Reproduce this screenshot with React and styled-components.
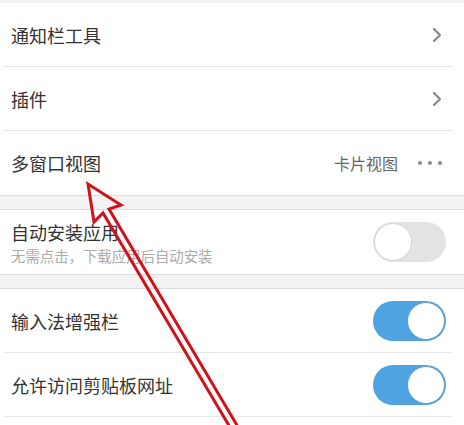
import React from "react";
import styled, { createGlobalStyle } from "styled-components";

const Global = createGlobalStyle`
  html, body { margin: 0; padding: 0; }
  body {
    background: #f3f3f3;
    font-family: "Noto Sans CJK SC", "Noto Sans", sans-serif;
    width: 464px;
    height: 425px;
    overflow: hidden;
  }
`;

const Page = styled.div`
  position: relative;
  width: 464px;
  height: 425px;
  padding-top: 3px;
  box-sizing: border-box;
  background: #f3f3f3;
  display: flex;
  flex-direction: column;
`;

const Group = styled.section`
  background: #fff;
  border-top: ${(p) => (p.$top ? "1px solid #dcdcdc" : "none")};
  border-bottom: ${(p) => (p.$bottom ? "1px solid #dcdcdc" : "none")};
  margin-top: ${(p) => p.$gap || 0}px;
  flex: ${(p) => (p.$grow ? 1 : "none")};
`;

const Row = styled.div`
  height: ${(p) => (p.$divider ? 63 : 64)}px;
  margin: 0 12px 0 4px;
  padding: 0 6px 0 7px;
  display: flex;
  align-items: center;
  justify-content: space-between;
  border-bottom: ${(p) => (p.$divider ? "1px solid #e6e6e6" : "none")};
`;

const TextCol = styled.div`
  display: flex;
  flex-direction: column;
  gap: 3px;
`;

const Title = styled.div`
  font-size: 18px;
  line-height: 24px;
  color: #333;
`;

const Sub = styled.div`
  font-size: 14.4px;
  line-height: 18px;
  color: #ababab;
`;

const Right = styled.div`
  display: flex;
  align-items: center;
  gap: 20px;
  padding-right: 4px;
`;

const Value = styled.span`
  font-size: 16px;
  color: #666;
`;

const Dots = styled.div`
  display: flex;
  gap: 6px;
  span {
    width: 4px;
    height: 4px;
    border-radius: 50%;
    background: #8a8a8a;
  }
`;

const Chevron = styled.svg`
  width: 10px;
  height: 16px;
  margin-right: 4px;
`;

const Track = styled.div`
  width: 73px;
  height: 40px;
  border-radius: 20px;
  box-sizing: border-box;
  background: ${(p) => (p.$on ? "#4fa3e0" : "#e3e3e3")};
  display: flex;
  align-items: center;
  justify-content: ${(p) => (p.$on ? "flex-end" : "flex-start")};
  padding: 0 1px;
`;

const Knob = styled.div`
  width: 38px;
  height: 38px;
  border-radius: 50%;
  box-sizing: border-box;
  background: #fff;
  border: 1px solid ${(p) => (p.$on ? "#6b9cc4" : "#d4d4d4")};
`;

const Overlay = styled.svg`
  position: absolute;
  left: 0;
  top: 0;
  width: 464px;
  height: 425px;
  pointer-events: none;
`;

const Arrow = () => (
  <Chevron viewBox="0 0 10 16">
    <path d="M2 2 L8 8 L2 14" fill="none" stroke="#8a8a8a" strokeWidth="2.2" strokeLinecap="round" strokeLinejoin="round" />
  </Chevron>
);

const Switch = ({ on }) => (
  <Track $on={on}>
    <Knob $on={on} />
  </Track>
);

export default function App() {
  return (
    <>
      <Global />
      <Page>
        <Group $bottom>
          <Row $divider>
            <Title>通知栏工具</Title>
            <Arrow />
          </Row>
          <Row $divider>
            <Title>插件</Title>
            <Arrow />
          </Row>
          <Row>
            <Title>多窗口视图</Title>
            <Right>
              <Value>卡片视图</Value>
              <Dots>
                <span />
                <span />
                <span />
              </Dots>
            </Right>
          </Row>
        </Group>
        <Group $top $bottom $gap={13}>
          <Row>
            <TextCol>
              <Title>自动安装应用</Title>
              <Sub>无需点击，下载应用后自动安装</Sub>
            </TextCol>
            <Switch on={false} />
          </Row>
        </Group>
        <Group $top $gap={13} $grow>
          <Row $divider>
            <Title>输入法增强栏</Title>
            <Switch on />
          </Row>
          <Row $divider>
            <Title>允许访问剪贴板网址</Title>
            <Switch on />
          </Row>
        </Group>
        <Overlay viewBox="0 0 464 425">
          <path
            d="M241 432 L109 209 L121 205 L88 184 L94 222 L103 213 L234 434"
            fill="none"
            stroke="#d0121a"
            strokeWidth="3"
            strokeLinejoin="miter"
          />
        </Overlay>
      </Page>
    </>
  );
}
